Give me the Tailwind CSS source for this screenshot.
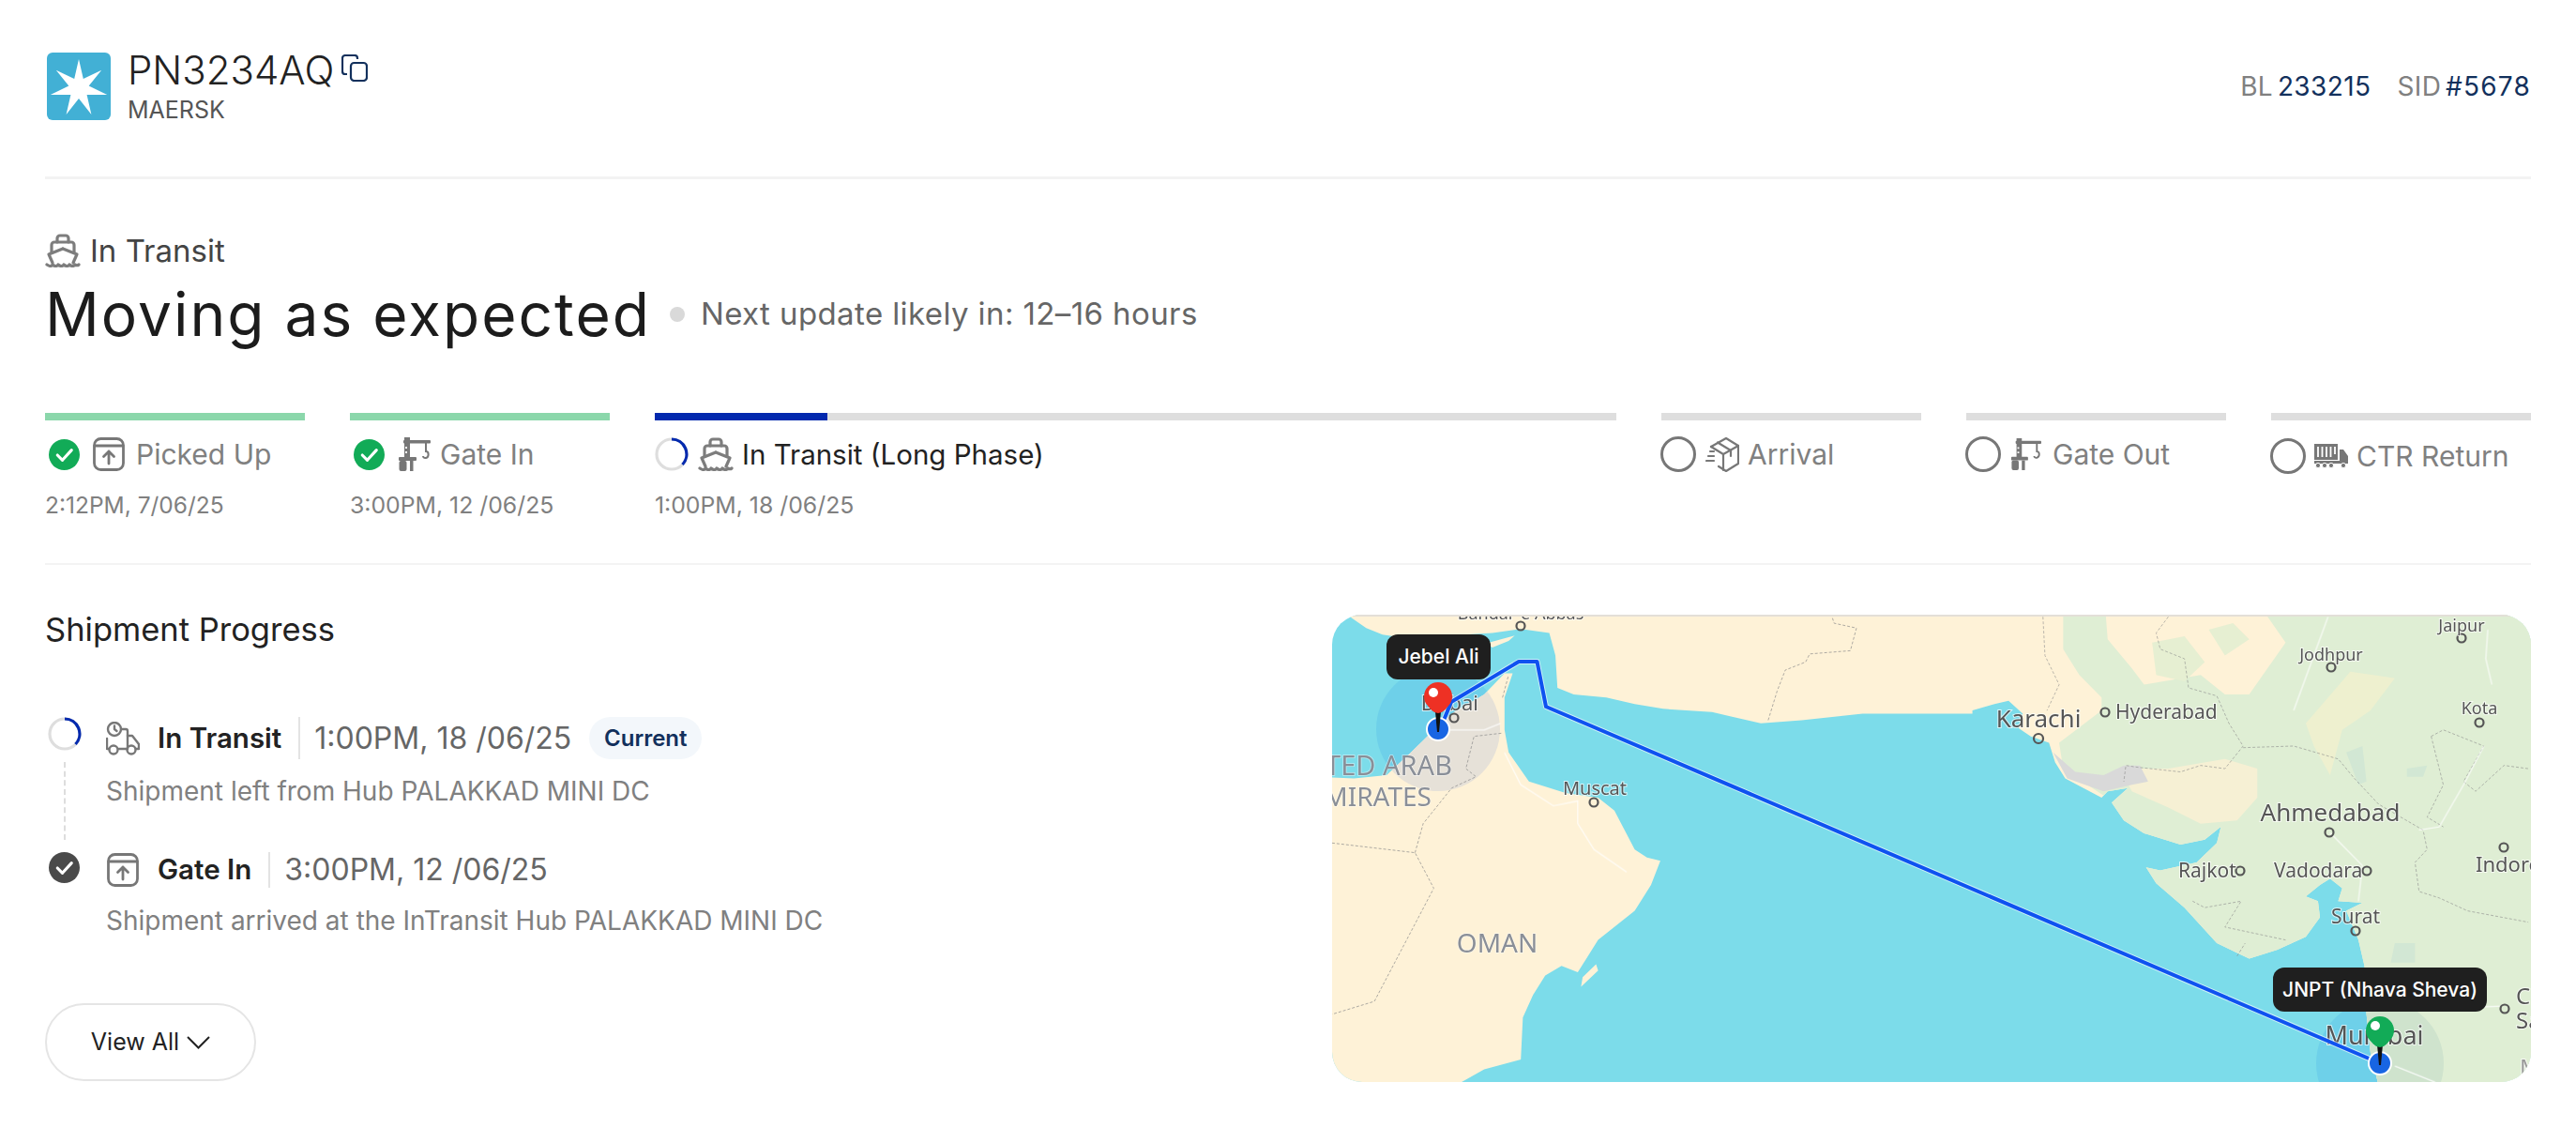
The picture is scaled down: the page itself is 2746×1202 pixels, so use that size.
<!DOCTYPE html>
<html lang="en">
<head>
  <meta charset="UTF-8">
  <meta name="viewport" content="width=device-width, initial-scale=1.0">
  <title>Shipment PN3234AQ</title>
  <script src="https://cdn.jsdelivr.net/npm/@tailwindcss/browser@4"></script>
</head>
<body class="bg-white font-['Inter',sans-serif] text-[#222]">
  <!-- shared icons -->
  <svg class="hidden">
    <symbol id="ic-check" viewBox="0 0 34 34"><circle cx="17" cy="17" r="17" fill="currentColor"/><path d="M9.5 17.5l5.5 5.5 10-11" fill="none" stroke="#fff" stroke-width="3.2" stroke-linecap="round" stroke-linejoin="round"/></symbol>
    <symbol id="ic-spin" viewBox="0 0 36 36"><circle cx="18" cy="18" r="16" fill="none" stroke="#dedede" stroke-width="3.2"/><path d="M18 2a16 16 0 0 1 11.5 27" fill="none" stroke="#0329ae" stroke-width="3.2"/></symbol>
    <symbol id="ic-ring" viewBox="0 0 38 38"><circle cx="19" cy="19" r="17.5" fill="none" stroke="#777" stroke-width="3"/></symbol>
    <symbol id="ic-box" viewBox="0 0 34 36"><g fill="none" stroke="#777" stroke-width="2.8" stroke-linecap="round" stroke-linejoin="round"><rect x="1.5" y="1.5" width="31" height="33" rx="7"/><path d="M2 9h30M17 28V15M11.5 20.5L17 15l5.5 5.5"/></g></symbol>
    <symbol id="ic-crane" viewBox="0 0 35 36"><g fill="#777"><rect x="7" y="0" width="6" height="24"/><rect x="6" y="3" width="29" height="3.4" rx="1"/><rect x="1" y="21" width="19" height="4" rx="1"/><rect x="1.5" y="25" width="8" height="11" rx="2"/><rect x="13" y="25" width="3.5" height="11"/></g><path d="M9 10v2M9 15v2" stroke="#fff" stroke-width="2"/><path d="M30 6v9c3.500 0 3.500 6 0 7-2 .5-3-1-3-2" fill="none" stroke="#777" stroke-width="2"/></symbol>
    <symbol id="ic-ship" viewBox="0 0 38 36"><g fill="none" stroke="#7d7d7d" stroke-width="3.200" stroke-linejoin="round" stroke-linecap="round"><path d="M13 9V5a3 3 0 0 1 3-3h6a3 3 0 0 1 3 3v4"/><path d="M7 20v-8a3 3 0 0 1 3-3h18a3 3 0 0 1 3 3v8"/><path d="M19 16L4 22l4 9M19 16l15 6-4 9"/><path d="M2 33c3 2 5 2 6 0 2 2 5 2 6 0 2 2 5 2 6 0 2 2 5 2 6 0 2 2 5 2 6 0 1 1 3 1 4 0"/></g></symbol>
    <symbol id="ic-pack" viewBox="0 0 36 37"><g fill="none" stroke="#777" stroke-width="2.2" stroke-linejoin="round" stroke-linecap="round"><path d="M6 10L22 1l13 8v19l-13 8-8-5"/><path d="M6 10l13 8 16-9M19 18v17"/><path d="M13 5.500l14 8.500v6"/><path d="M1 25h8M3 20h6M5 15h4"/></g></symbol>
    <symbol id="ic-truck" viewBox="0 0 36 26"><path d="M0 0h25v17H0z" fill="#777"/><path d="M4 3v11M8.500 3v11M13 3v11M17.500 3v11M22 3v8" stroke="#fff" stroke-width="1.800"/><path d="M27 6h4l5 7v8H0v-3h27z" fill="#777"/><g fill="#777" stroke="#fff"><circle cx="4" cy="23" r="2.600"/><circle cx="11" cy="23" r="2.600"/><circle cx="18" cy="23" r="2.600"/><circle cx="31" cy="23" r="2.600"/></g></symbol>
    <symbol id="ic-road" viewBox="0 0 36 36"><g fill="none" stroke="#777" stroke-width="2.400" stroke-linejoin="round" stroke-linecap="round"><circle cx="9" cy="8" r="7"/><path d="M9 4.500V8l2.500 2"/><path d="M16 8h5a2 2 0 0 1 2 2v19H14M1 18v11h2"/><path d="M23 15h5l7 9v5h-3"/><circle cx="8" cy="30" r="4.500"/><circle cx="27" cy="30" r="4.500"/></g></symbol>
  </svg>

  <main class="px-[48px]">
    <!-- Header -->
    <header class="flex justify-between pt-[56px] h-[128px]">
      <div class="flex">
        <svg class="w-[68px] h-[72px] ml-[2px]" viewBox="0 0 68 72"><rect width="68" height="72" rx="6" fill="#42b0d5"/><path d="M34 7l4.800 21.100 19.400-9.400-13.500 16.900 19.500 9.300H42.600l4.800 21-13.400-16.900-13.400 16.900 4.800-21H3.800l19.500-9.300L9.800 18.700l19.400 9.400z" fill="#fff"/></svg>
        <div class="ml-[18px]">
          <div class="flex items-start">
            <span class="text-[42px] font-light leading-[38px] text-[#222]">PN3234AQ</span>
            <svg class="w-[28px] h-[29px] ml-[8px] mt-[2px]" viewBox="0 0 28 29" fill="none" stroke="#12305c" stroke-width="2.200"><rect x="10" y="9" width="17" height="19" rx="3.500"/><path d="M6 21H4a3 3 0 0 1-3-3V4a3 3 0 0 1 3-3h10a3 3 0 0 1 3 3v1"/></svg>
          </div>
          <div class="text-[25px] leading-[28px] mt-[9px] text-[#555]">MAERSK</div>
        </div>
      </div>
      <div class="flex gap-[28px] text-[28px] tracking-[0.4px] [word-spacing:-3.500px] leading-[34px] mt-[19px] h-[34px]">
        <span class="text-[#808080]">BL <span class="text-[#12305c]">233215</span></span>
        <span class="text-[#808080]">SID <span class="text-[#12305c] tracking-[1.200px]">#5678</span></span>
      </div>
    </header>
    <div class="h-[3px] bg-[#f3f3f3] mt-[60px]"></div>

    <!-- Status -->
    <section class="mt-[58px]">
      <div class="flex items-center h-[36px]">
        <svg class="w-[38px] h-[36px] mr-[10px]"><use href="#ic-ship"/></svg>
        <span class="text-[33px] leading-[36px] text-[#444]">In Transit</span>
      </div>
      <div class="flex items-center mt-[14px] h-[72px]">
        <h1 class="text-[64px] tracking-[2px] leading-[72px] text-[#1c1c1c]">Moving as expected</h1>
        <span class="w-[16px] h-[16px] rounded-full bg-[#d9d9d9] ml-[20px]"></span>
        <span class="text-[33px] tracking-[0.4px] ml-[17px] text-[#666]">Next update likely in: 12–16 hours</span>
      </div>
    </section>

    <!-- Milestones -->
    <section class="flex gap-[48px] mt-[69px]">
      <div class="w-[277px]">
        <div class="h-[8px] bg-[#8bd7ab]"></div>
        <div class="flex items-center h-[36px] mt-[18px] pl-[4px] text-[#808080] text-[30px]">
          <svg class="w-[33px] h-[33px] text-[#12ab57]"><use href="#ic-check"/></svg>
          <svg class="w-[34px] h-[36px] ml-[14px]"><use href="#ic-box"/></svg>
          <span class="ml-[12px]">Picked Up</span>
        </div>
        <div class="text-[24.500px] leading-[34px] mt-[19px] text-[#808080]">2:12PM, 7/06/25</div>
      </div>
      <div class="w-[277px]">
        <div class="h-[8px] bg-[#8bd7ab]"></div>
        <div class="flex items-center h-[36px] mt-[18px] pl-[4px] text-[#808080] text-[30px]">
          <svg class="w-[33px] h-[33px] text-[#12ab57]"><use href="#ic-check"/></svg>
          <svg class="w-[35px] h-[36px] ml-[14px]"><use href="#ic-crane"/></svg>
          <span class="ml-[10px]">Gate In</span>
        </div>
        <div class="text-[24.800px] leading-[34px] mt-[19px] text-[#808080]">3:00PM, 12 /06/25</div>
      </div>
      <div class="flex-1">
        <div class="h-[8px] bg-[#dedede]"><div class="h-full w-[184px] bg-[#0329ae]"></div></div>
        <div class="flex items-center h-[36px] mt-[18px] text-[#222] text-[29.500px]">
          <svg class="w-[36px] h-[36px]"><use href="#ic-spin"/></svg>
          <svg class="w-[38px] h-[36px] ml-[10px]"><use href="#ic-ship"/></svg>
          <span class="ml-[9px]">In Transit (Long Phase)</span>
        </div>
        <div class="text-[24.800px] leading-[34px] mt-[19px] text-[#808080]">1:00PM, 18 /06/25</div>
      </div>
      <div class="w-[277px]">
        <div class="h-[8px] bg-[#dedede]"></div>
        <div class="flex items-center h-[38px] mt-[17px] text-[#808080] text-[30px]">
          <svg class="w-[38px] h-[38px] -ml-[1px]"><use href="#ic-ring"/></svg>
          <svg class="w-[36px] h-[37px] ml-[10px]"><use href="#ic-pack"/></svg>
          <span class="ml-[9px]">Arrival</span>
        </div>
      </div>
      <div class="w-[277px]">
        <div class="h-[8px] bg-[#dedede]"></div>
        <div class="flex items-center h-[38px] mt-[17px] text-[#808080] text-[30px]">
          <svg class="w-[38px] h-[38px] -ml-[1px]"><use href="#ic-ring"/></svg>
          <svg class="w-[33px] h-[36px] ml-[10px]"><use href="#ic-crane"/></svg>
          <span class="ml-[12px]">Gate Out</span>
        </div>
      </div>
      <div class="w-[277px]">
        <div class="h-[8px] bg-[#dedede]"></div>
        <div class="flex items-center h-[38px] mt-[19px] text-[#808080] text-[30px]">
          <svg class="w-[38px] h-[38px] -ml-[1px]"><use href="#ic-ring"/></svg>
          <svg class="w-[36px] h-[26px] ml-[9px]"><use href="#ic-truck"/></svg>
          <span class="ml-[9px]">CTR Return</span>
        </div>
      </div>
    </section>
    <div class="h-[2px] bg-[#f3f3f3] mt-[45px]"></div>

    <!-- Progress + map -->
    <section class="flex justify-between">
      <div class="mt-[49px] flex flex-col h-[501px]">
        <h2 class="text-[34.500px] leading-[40px] text-[#222]">Shipment Progress</h2>
        <div class="flex mt-[73px] h-[140px]">
          <div class="w-[41px] mr-[24px] flex flex-col items-center">
            <svg class="w-[36px] h-[36px]"><use href="#ic-spin"/></svg>
            <div class="mt-[12px] h-[83px] border-l-2 border-dashed border-[#ddd]"></div>
          </div>
          <div>
            <div class="flex items-center h-[45px]">
              <svg class="w-[36px] h-[36px]"><use href="#ic-road"/></svg>
              <span class="ml-[19px] text-[29.500px] font-semibold text-[#222]">In Transit</span>
              <span class="w-[2px] h-[45px] bg-[#e3e3e3] ml-[18px]"></span>
              <span class="ml-[15px] text-[32px] text-[#666]">1:00PM, 18 /06/25</span>
              <span class="ml-[19px] h-[45px] w-[120px] rounded-full bg-[#f3f7fb] flex items-center justify-center text-[24px] font-semibold text-[#12305c]">Current</span>
            </div>
            <p class="mt-[16px] text-[28px] leading-[36px] text-[#808080]">Shipment left from Hub PALAKKAD MINI DC</p>
          </div>
        </div>
        <div class="flex">
          <div class="w-[41px] mr-[24px] flex flex-col items-center pt-[4px]">
            <svg class="w-[33px] h-[33px] text-[#4a4a4a]"><use href="#ic-check"/></svg>
          </div>
          <div>
            <div class="flex items-center h-[45px]">
              <svg class="w-[36px] h-[36px]"><use href="#ic-box"/></svg>
              <span class="ml-[19px] text-[29.500px] font-semibold text-[#222]">Gate In</span>
              <span class="w-[2px] h-[38px] bg-[#e3e3e3] ml-[18px]"></span>
              <span class="ml-[15px] text-[32px] text-[#666]">3:00PM, 12 /06/25</span>
            </div>
            <p class="mt-[14px] text-[28px] leading-[36px] text-[#808080]">Shipment arrived at the InTransit Hub PALAKKAD MINI DC</p>
          </div>
        </div>
        <button class="mt-auto w-[225px] h-[83px] rounded-full border-2 border-[#e5e5e5] flex items-center justify-center gap-[8px] text-[25px] text-[#222]">
          View All
          <svg class="w-[25px] h-[14px]" viewBox="0 0 25 14" fill="none" stroke="#222" stroke-width="2"><path d="M1 1l11.500 11.500L24 1"/></svg>
        </button>
      </div>

      <!-- Map: a free canvas, drawn in page coordinates -->
      <div class="relative w-[1278px] h-[498px] mt-[53px] rounded-[32px] overflow-hidden bg-[#7cdcea]">
        <svg class="w-full h-full" viewBox="1420 655 1278 498" font-family="Noto Sans, sans-serif">
          <defs>
            <clipPath id="land-clip">
              <path transform="translate(1400 640) scale(.4337 .3444)" d="M60 30L90 50 130 85 170 105 240 118 330 108 440 100 510 88 580 100 595 170 600 270 640 290 720 300 790 320 860 335 980 345 1100 380 1200 370 1350 350 1620 350 1620 30z"/>
              <path transform="translate(1400 640) scale(.4337 .3444)" d="M0 545L100 550 180 540 240 470 280 420 340 350 420 290 470 225 490 225 470 300 470 400 480 470 530 560 620 595 700 610 740 650 790 770 820 795 853 805 830 880 790 960 700 1050 650 1150 610 1130 570 1160 540 1220 515 1290 510 1420 420 1450 350 1500 0 1500z"/>
              <path transform="translate(2070 640) scale(.4311 .3444)" d="M-30 350L60 345 130 320 165 310 200 350 190 395 220 420 265 440 280 500 305 550 350 580 395 610 410 590 460 580 420 625 450 680 500 720 590 755 650 740 690 700 680 750 630 810 540 835 505 825 530 875 600 950 680 1060 760 1108 830 1080 900 1040 935 980 930 930 900 915 935 880 960 860 990 890 980 930 1040 935 1000 960 1030 1050 1045 1130 1050 1280 1060 1400 1080 1500 1500 1500 1500 30-30 30z"/>
            </clipPath>
          </defs>
          <!-- halo under land -->
          <circle cx="1533" cy="777" r="66" fill="#6ed0e9"/>
          <circle cx="2537" cy="1133" r="68" fill="#6ed0e9"/>
          <!-- land -->
          <g clip-path="url(#land-clip)">
            <rect x="1420" y="655" width="1278" height="498" fill="#fef2d7"/>
            <g transform="translate(2070 640) scale(.4311 .3444)">
              <path fill="#dfeed4" d="M300 40L300 150 340 230 395 300 395 340 290 440 300 520 420 620 430 1500 1500 1500 1500 40z"/>
              <path fill="#fef2d7" d="M405 40L410 120 470 210 500 260 640 230 700 290 760 290 850 130 800 40z"/>
              <path fill="#e6efd2" d="M520 130L600 110 650 190 600 250 530 230z M660 90L720 70 760 120 700 170z"/>
              <path fill="#f6f0d4" d="M440 520L560 520 700 490 780 520 780 610 730 680 640 690 560 640 470 590z"/>
              <path fill="#eef0cf" d="M900 380L1010 220 1120 240 1060 340 990 400 960 540 920 450z"/>
              <path fill="#d2e7d4" d="M1000 470L1040 450 1050 560 1030 570z M1120 1060L1170 1060 1170 1120 1110 1120z M1150 520L1200 510 1190 545 1150 545z"/>
              <path fill="#d9d9d9" d="M275 470L310 550 400 590 470 570 510 560 490 510 450 510 400 540 330 530z"/>
            </g>
            <circle cx="1533" cy="777" r="66" fill="#e6e1d8"/>
            <circle cx="2537" cy="1133" r="68" fill="#cfe3cd"/>
          </g>
          <!-- small islands -->
          <path transform="translate(1400 640) scale(.4337 .3444)" d="M425 132L495 108 480 125 440 145z M658 1195L662 1165 695 1125 700 1145z" fill="#fef2d7"/>
          <!-- borders and roads -->
          <g fill="none" stroke="#8d8d8d" stroke-width="1" stroke-dasharray="3 2" opacity=".7" transform="translate(1400 640) scale(.4337 .3444)">
            <path vector-effect="non-scaling-stroke" d="M46 750L250 780 296 890 150 1240 46 1280"/>
            <path vector-effect="non-scaling-stroke" d="M250 780L270 690 340 580 400 545 375 520 395 420 465 410M465 300L480 230"/>
            <path vector-effect="non-scaling-stroke" d="M1118 370L1140 280 1160 215 1210 190 1220 165 1320 155 1335 85 1280 70 1275 50"/>
          </g>
          <g fill="none" stroke="#8d8d8d" stroke-width="1" stroke-dasharray="3 2" opacity=".6" transform="translate(2070 640) scale(.4311 .3444)">
            <path vector-effect="non-scaling-stroke" d="M250 50L255 170 290 260 260 340"/>
            <path vector-effect="non-scaling-stroke" d="M560 50L530 100 540 150 600 180 610 270 680 295 710 380 745 450 700 520 640 510 590 530 480 515 455 510 450 560"/>
            <path vector-effect="non-scaling-stroke" d="M745 455L870 450 980 490 1020 550 1080 630 1190 710 1200 770 1170 810 1180 900 1230 920 1300 960 1450 995"/>
            <path vector-effect="non-scaling-stroke" d="M1210 420L1240 400 1340 450 1290 560 1320 590 1390 510 1450 520M1210 420L1240 570 1200 670 1240 700"/>
            <path vector-effect="non-scaling-stroke" d="M620 930L650 950 740 930 700 1010 850 1050M730 1100L750 1060"/>
          </g>
          <g fill="none" stroke="#fff" stroke-width="1.200" opacity=".85">
            <path transform="translate(1400 640) scale(.4337 .3444)" vector-effect="non-scaling-stroke" d="M470 470L510 570 590 635 650 620 650 690 690 770 770 840M320 400L420 400 460 380"/>
            <path transform="translate(2070 640) scale(.4311 .3444)" vector-effect="non-scaling-stroke" d="M955 50L870 340M1340 450L1290 570 1230 700 1180 710M960 718L1040 820 1030 930M1350 90L1345 180 1360 260M1050 1270L1380 1255M1120 1440L1220 1490"/>
          </g>
          <!-- places -->
          <g fill="none" stroke="#555" stroke-width="2.200">
            <circle cx="1621" cy="667" r="4.500"/><circle cx="1550" cy="765" r="4.500"/><circle cx="1699" cy="855" r="4.500"/>
            <circle cx="2173" cy="787" r="5"/><circle cx="2244" cy="759" r="4.500"/><circle cx="2624" cy="680" r="4.500"/><circle cx="2485" cy="711" r="4.500"/>
            <circle cx="2643" cy="770" r="4.500"/><circle cx="2483" cy="887" r="4.500"/><circle cx="2669" cy="903" r="4.500"/><circle cx="2388" cy="928" r="4.500"/>
            <circle cx="2523" cy="928" r="4.500"/><circle cx="2511" cy="992" r="4.500"/><circle cx="2670" cy="1075" r="4.500"/>
          </g>
          <g fill="#555" stroke="#fff" stroke-width="2" paint-order="stroke" stroke-opacity=".7">
            <text x="1621" y="660" font-size="18" text-anchor="middle">Bandar-e Abbas</text>
            <text x="1576" y="757" font-size="22" text-anchor="end">Dubai</text>
            <text x="1700" y="847" font-size="20" text-anchor="middle">Muscat</text>
            <text x="2173" y="775" font-size="26" text-anchor="middle">Karachi</text>
            <text x="2255" y="766" font-size="21">Hyderabad</text>
            <text x="2624" y="673" font-size="18" text-anchor="middle">Jaipur</text>
            <text x="2485" y="704" font-size="18" text-anchor="middle">Jodhpur</text>
            <text x="2643" y="761" font-size="18" text-anchor="middle">Kota</text>
            <text x="2484" y="875" font-size="26" text-anchor="middle">Ahmedabad</text>
            <text x="2639" y="929" font-size="22">Indore</text>
            <text x="2322" y="935" font-size="21">Rajkot</text>
            <text x="2424" y="935" font-size="21">Vadodara</text>
            <text x="2511" y="984" font-size="21" text-anchor="middle">Surat</text>
            <text x="2531" y="1113" font-size="27" text-anchor="middle">Mumbai</text>
            <text x="2682" y="1070" font-size="24">Ch</text>
            <text x="2682" y="1096" font-size="24">Sa</text>
            <text x="2686" y="1146" font-size="24" fill="#999">M</text>
          </g>
          <g fill="#8a8f98" font-size="28" stroke="#fff" stroke-width="1.500" paint-order="stroke" stroke-opacity=".5">
            <text x="1548" y="826" font-size="29" text-anchor="end">UNITED ARAB</text>
            <text x="1526" y="859" text-anchor="end">EMIRATES</text>
            <text x="1596" y="1015" text-anchor="middle">OMAN</text>
          </g>
          <!-- route -->
          <path d="M1538 770L1547 748 1619 705 1638.500 705 1648 753 2537 1133" fill="none" stroke="#fff" stroke-width="6" stroke-linejoin="round" opacity=".6"/>
          <path d="M1538 770L1547 748 1619 705 1638.500 705 1648 753 2537 1133" fill="none" stroke="#0f52f0" stroke-width="4" stroke-linejoin="round"/>
          <!-- pins -->
          <circle cx="1533" cy="777" r="12" fill="#1865e3" stroke="#fff" stroke-width="2"/>
          <path d="M1530 758h6l-2 22h-2z" fill="#111"/>
          <circle cx="1533" cy="742" r="15" fill="#ee3124"/><path d="M1520 748q6 12 13 12 7 0 13-12z" fill="#ee3124"/>
          <circle cx="1528" cy="738" r="5" fill="#fff"/>
          <circle cx="2537" cy="1133" r="12" fill="#1865e3" stroke="#fff" stroke-width="2"/>
          <path d="M2534 1113h6l-2 22h-2z" fill="#111"/>
          <circle cx="2537" cy="1098" r="15" fill="#12ab57"/><path d="M2524 1104q6 12 13 12 7 0 13-12z" fill="#12ab57"/>
          <circle cx="2532" cy="1093" r="5" fill="#fff"/>
          <rect x="1420" y="655" width="1278" height="2" fill="#e3dfd8"/>
        </svg>
        <div class="absolute left-[58px] top-[21px] w-[111px] h-[48px] rounded-[12px] bg-[#1f1f1f] text-white text-[21px] font-medium flex items-center justify-center">Jebel Ali</div>
        <div class="absolute left-[1003px] top-[376px] w-[228px] h-[47px] rounded-[12px] bg-[#1f1f1f] text-white text-[21px] font-medium flex items-center justify-center whitespace-nowrap">JNPT (Nhava Sheva)</div>
      </div>
    </section>
  </main>
</body>
</html>
